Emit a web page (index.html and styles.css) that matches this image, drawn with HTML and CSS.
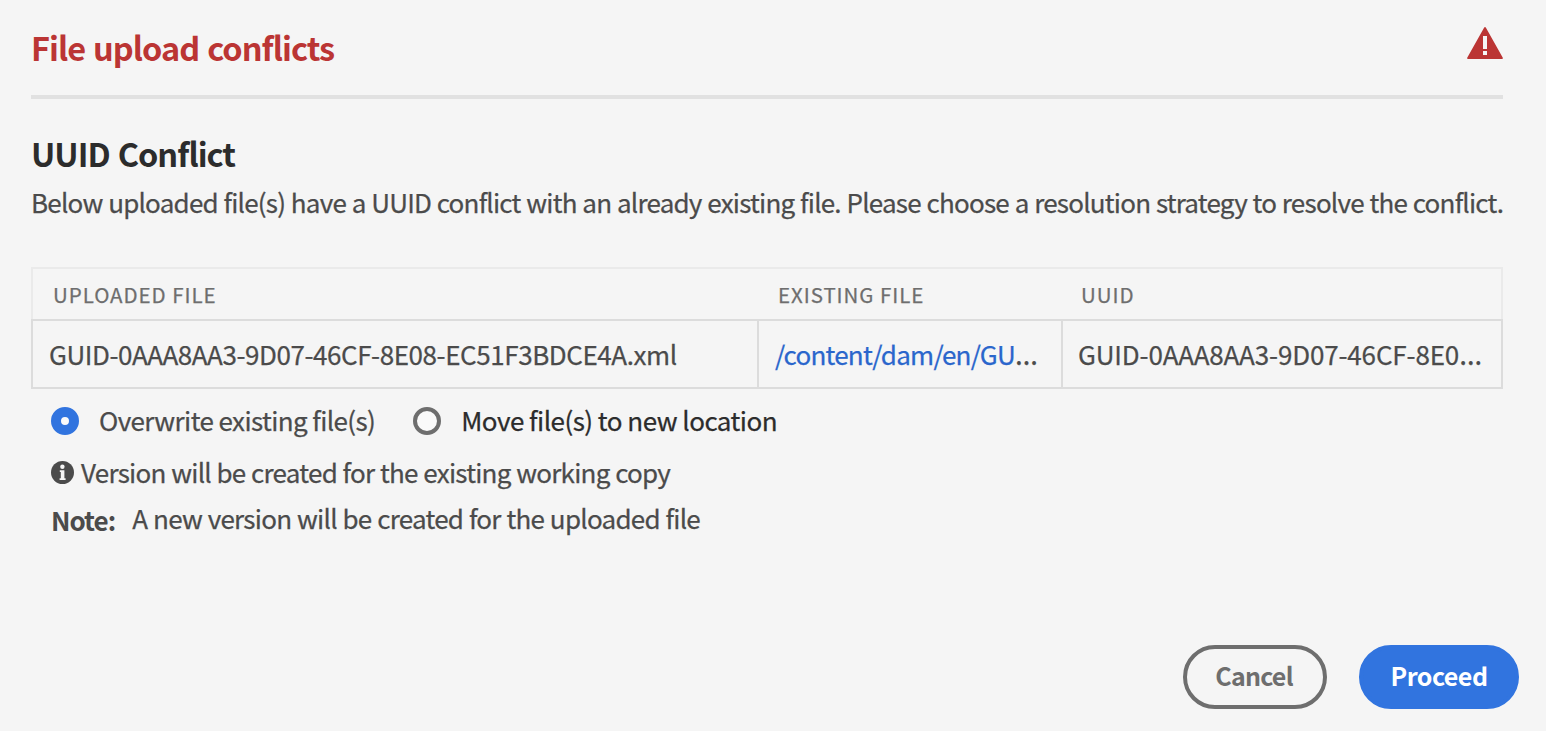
FILE: index.html
```
<!DOCTYPE html>
<html lang="en">
<head>
<meta charset="utf-8">
<title>File upload conflicts</title>
<link rel="stylesheet" href="styles.css">
</head>
<body>
<main class="dialog">
  <header class="dialog-header">
    <h1 class="dialog-title">File upload conflicts</h1>
    <svg class="alert-icon" viewBox="0 0 36 32" aria-hidden="true">
      <path fill="#bb3534" fill-rule="evenodd" d="M17.2.5a.9.9 0 0 1 1.6 0L35.8 30.8a.8.8 0 0 1-.7 1.2H.9a.8.8 0 0 1-.7-1.2zM16 9v13h4V9zM16 24v4h4v-4z"/>
    </svg>
  </header>
  <section class="conflict">
    <h2 class="conflict-title">UUID Conflict</h2>
    <p class="conflict-text">Below uploaded file(s) have a UUID conflict with an already existing file. Please choose a resolution strategy to resolve the conflict.</p>
    <div class="table">
      <div class="row head"><div>UPLOADED FILE</div><div>EXISTING FILE</div><div>UUID</div></div>
      <div class="row body">
        <div class="guid">GUID-0AAA8AA3-9D07-46CF-8E08-EC51F3BDCE4A.xml</div>
        <div><a class="path">/content/dam/en/GU</a><span class="dots">…</span></div>
        <div class="uuid">GUID-0AAA8AA3-9D07-46CF-8E0<span class="dots">…</span></div>
      </div>
    </div>
    <div class="options">
      <label class="option"><i class="radio checked"></i><span>Overwrite existing file(s)</span></label>
      <label class="option other"><i class="radio"></i><span>Move file(s) to new location</span></label>
    </div>
    <p class="info">
      <svg class="info-icon" viewBox="0 0 23 23" aria-hidden="true"><circle cx="11.5" cy="11.5" r="11.5" fill="#4b4b4b"/><circle cx="11.4" cy="5.7" r="2.2" fill="#f5f5f5"/><path fill="#f5f5f5" d="M8.8 9.2h4.6v8H14.6V19H8.6v-1.8h1.2v-6.2h-1z"/></svg>
      <span>Version will be created for the existing working copy</span>
    </p>
    <p class="note"><b>Note:</b><span>A new version will be created for the uploaded file</span></p>
  </section>
  <footer class="actions">
    <button class="btn secondary">Cancel</button>
    <button class="btn primary">Proceed</button>
  </footer>
</main>
</body>
</html>
```
FILE: styles.css
```
* { box-sizing: border-box; }
body { margin: 0; background: #f5f5f5; color: #4b4b4b; font: 400 26px/34px "Noto Sans CJK SC", "Noto Sans", sans-serif; -webkit-text-stroke: 0.25px currentColor; }
h1, h2, p { margin: 0; }
.dialog { display: flex; flex-direction: column; height: 731px; padding: 27px 27px 22px 31px; white-space: nowrap; }
.dialog-header { display: flex; justify-content: space-between; align-items: flex-start; height: 72px; margin-right: 16px; border-bottom: 4px solid #e1e1e1; }
.dialog-title, .conflict-title { font-size: 32.5px; line-height: 40px; font-weight: 700; letter-spacing: -0.96px; word-spacing: 1.5px; -webkit-text-stroke: 0; }
.dialog-title { color: #bb3534; }
.alert-icon { width: 36px; height: 32px; }
.conflict { flex: 1; margin-right: 16px; padding-top: 34px; }
.conflict-title { color: #2c2c2c; }
.conflict-text { margin-top: 12px; letter-spacing: -0.775px; word-spacing: 0.6px; }
.table { margin-top: 48px; }
.row { display: grid; grid-template-columns: 725px 303px 1fr; }
.head { height: 52px; border: 2px solid #eaeaea; border-bottom: 0; color: #6e6e6e; font-size: 20.5px; line-height: 51px; letter-spacing: 0.95px; }
.head > div { padding-left: 20px; }
.body { height: 70px; border: 2px solid #dcdcdc; line-height: 66px; grid-template-columns: 724px 304px 1fr; letter-spacing: -0.75px; }
.body > div { padding-left: 16px; }
.body > div + div { border-left: 2px solid #dcdcdc; }
.body > .guid { letter-spacing: -0.43px; }
.body > .uuid { padding-left: 15px; letter-spacing: -0.15px; }
.dots { font-family: "Noto Sans", sans-serif; font-size: 29px; line-height: 1; }
.path { color: #2a66cc; }
.options { display: flex; gap: 38px; padding: 15px 0 0 20px; letter-spacing: -0.6px; }
.option { display: flex; align-items: center; gap: 20px; }
.option span { line-height: 32px; padding-bottom: 2px; }
.other { color: #2c2c2c; letter-spacing: -0.52px; }
.radio { width: 28px; height: 28px; border: 4px solid #6e6e6e; border-radius: 50%; background: #fafafa; }
.checked { border: 10px solid #3174df; }
.info { display: flex; align-items: center; gap: 7px; padding-left: 20px; margin-top: 17px; letter-spacing: -0.75px; word-spacing: 0.5px; }
.info-icon { width: 23px; height: 23px; }
.note { display: flex; gap: 17px; padding-left: 20px; margin-top: 12px; letter-spacing: -0.74px; word-spacing: 0.6px; }
.note b { padding-top: 2px; font-weight: 700; letter-spacing: -0.95px; -webkit-text-stroke: 0; }
.actions { display: flex; justify-content: flex-end; gap: 32px; }
.btn { width: 144px; height: 64px; padding: 0 2px 4px 0; border: 4px solid #6e6e6e; border-radius: 32px; background: none; color: #6e6e6e; font: 700 25px/52px "Noto Sans CJK SC", "Noto Sans", sans-serif; letter-spacing: -0.75px; -webkit-text-stroke: 0; }
.primary { width: 160px; padding-right: 0; border-color: #3174df; background: #3174df; color: #fff; letter-spacing: -0.5px; }
```
